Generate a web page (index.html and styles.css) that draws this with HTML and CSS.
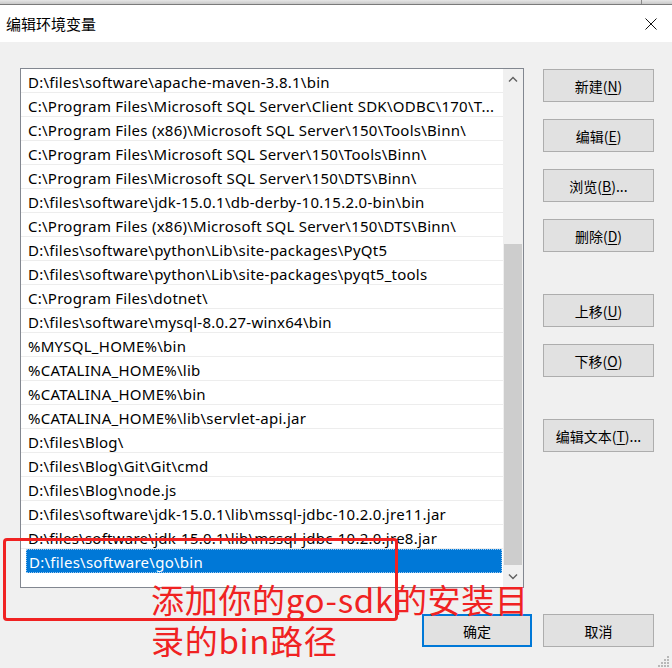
FILE: index.html
```html
<!DOCTYPE html>
<html lang="zh-CN">
<head>
<meta charset="utf-8">
<title>编辑环境变量</title>
<link rel="stylesheet" href="styles.css">
</head>
<body>
<div class="win">
  <div class="behind"><div class="behind-a"></div><div class="behind-b"></div></div>
  <div class="titlebar">
    <span class="title">编辑环境变量</span>
    <svg class="close" width="14" height="14" viewBox="0 0 14 14"><path d="M1.5 1.5 L12.5 12.5 M12.5 1.5 L1.5 12.5" stroke="#111" stroke-width="1" fill="none"/></svg>
  </div>
  <div class="content">
    <div class="main">
      <div class="list">
        <div class="rows">
          <div class="row">D:\files\software\apache-maven-3.8.1\bin</div>
          <div class="row">C:\Program Files\Microsoft SQL Server\Client SDK\ODBC\170\T...</div>
          <div class="row">C:\Program Files (x86)\Microsoft SQL Server\150\Tools\Binn\</div>
          <div class="row">C:\Program Files\Microsoft SQL Server\150\Tools\Binn\</div>
          <div class="row">C:\Program Files\Microsoft SQL Server\150\DTS\Binn\</div>
          <div class="row">D:\files\software\jdk-15.0.1\db-derby-10.15.2.0-bin\bin</div>
          <div class="row">C:\Program Files (x86)\Microsoft SQL Server\150\DTS\Binn\</div>
          <div class="row">D:\files\software\python\Lib\site-packages\PyQt5</div>
          <div class="row">D:\files\software\python\Lib\site-packages\pyqt5_tools</div>
          <div class="row">C:\Program Files\dotnet\</div>
          <div class="row">D:\files\software\mysql-8.0.27-winx64\bin</div>
          <div class="row">%MYSQL_HOME%\bin</div>
          <div class="row">%CATALINA_HOME%\lib</div>
          <div class="row">%CATALINA_HOME%\bin</div>
          <div class="row">%CATALINA_HOME%\lib\servlet-api.jar</div>
          <div class="row">D:\files\Blog\</div>
          <div class="row">D:\files\Blog\Git\Git\cmd</div>
          <div class="row">D:\files\Blog\node.js</div>
          <div class="row">D:\files\software\jdk-15.0.1\lib\mssql-jdbc-10.2.0.jre11.jar</div>
          <div class="row">D:\files\software\jdk-15.0.1\lib\mssql-jdbc-10.2.0.jre8.jar</div>
          <div class="row selected">D:\files\software\go\bin</div>
        </div>
        <div class="sbar">
          <div class="sb-btn"><svg width="10" height="6" viewBox="0 0 10 6"><path d="M1 5.5 L5 1.5 L9 5.5" stroke="#606060" stroke-width="1.4" fill="none"/></svg></div>
          <div class="sb-track"><div class="sb-thumb"></div></div>
          <div class="sb-btn"><svg width="10" height="6" viewBox="0 0 10 6"><path d="M1 0.5 L5 4.5 L9 0.5" stroke="#606060" stroke-width="1.4" fill="none"/></svg></div>
        </div>
      </div>
      <div class="side">
        <button class="btn">新建(<u>N</u>)</button>
        <button class="btn">编辑(<u>E</u>)</button>
        <button class="btn">浏览(<u>B</u>)...</button>
        <button class="btn">删除(<u>D</u>)</button>
        <button class="btn group">上移(<u>U</u>)</button>
        <button class="btn">下移(<u>O</u>)</button>
        <button class="btn group">编辑文本(<u>T</u>)...</button>
      </div>
    </div>
    <div class="footer">
      <button class="btn primary">确定</button>
      <button class="btn">取消</button>
    </div>
  </div>
  <div class="annot-box"></div>
  <div class="annot-text">添加你的go-sdk的安装目<br>录的bin路径</div>
  <svg class="grip" width="12" height="12" viewBox="0 0 12 12">
    <rect x="9" y="1" width="2" height="2" fill="#b8b8b8"/>
    <rect x="6" y="4" width="2" height="2" fill="#b8b8b8"/>
    <rect x="9" y="4" width="2" height="2" fill="#b8b8b8"/>
    <rect x="3" y="7" width="2" height="2" fill="#b8b8b8"/>
    <rect x="6" y="7" width="2" height="2" fill="#b8b8b8"/>
    <rect x="9" y="7" width="2" height="2" fill="#b8b8b8"/>
    <rect x="0" y="10" width="2" height="2" fill="#b8b8b8"/>
    <rect x="3" y="10" width="2" height="2" fill="#b8b8b8"/>
    <rect x="6" y="10" width="2" height="2" fill="#b8b8b8"/>
    <rect x="9" y="10" width="2" height="2" fill="#b8b8b8"/>
  </svg>
</div>
</body>
</html>
```

FILE: styles.css
```css
* { box-sizing: border-box; }
html, body { margin: 0; padding: 0; }
body {
  width: 672px;
  height: 668px;
  overflow: hidden;
  background: #f0f0f0;
  font-family: "Noto Sans", "Noto Sans CJK SC", sans-serif;
}
.win {
  position: relative;
  width: 672px;
  height: 668px;
  background: #f0f0f0;
}
.behind {
  display: flex;
  height: 5px;
  border-bottom: 1px solid #7a7a7a;
  background: linear-gradient(#e6e6e6, #c9c9c9);
}
.behind-a { width: 641px; }
.behind-b { flex: 1; border-left: 1px solid #8a8a8a; }
.titlebar {
  display: flex;
  align-items: center;
  justify-content: space-between;
  height: 37px;
  background: #ffffff;
  padding: 0 14px 0 6px;
}
.title {
  font-family: "Noto Sans CJK SC", sans-serif;
  font-size: 15px;
  color: #000;
}
.close { display: block; }
.content {
  padding: 26px 18px 0 20px;
}
.main {
  display: flex;
  align-items: flex-start;
}
.list {
  display: flex;
  width: 504px;
  height: 520px;
  border: 1px solid #828790;
  background: #fff;
}
.rows {
  flex: 1;
  min-width: 0;
}
.row {
  height: 24px;
  line-height: 23px;
  padding-left: 7px;
  padding-top: 2px;
  border-bottom: 1px solid #ededed;
  font-size: 15px;
  letter-spacing: 0.25px;
  color: #000;
  white-space: nowrap;
  overflow: hidden;
}
.row.selected {
  margin-left: 5px;
  margin-right: 1px;
  padding-left: 2px;
  padding-top: 2px;
  background: #0078d7;
  color: #fff;
  border: 1px dotted #9cc8ef;
  line-height: 20px;
}
.sbar {
  width: 20px;
  display: flex;
  flex-direction: column;
  background: #f0f0f0;
}
.sb-btn {
  height: 20px;
  display: flex;
  align-items: center;
  justify-content: center;
}
.sb-track {
  flex: 1;
  padding: 155px 1px 0 1px;
}
.sb-thumb {
  height: 321px;
  background: #cdcdcd;
}
.side {
  margin-left: 19px;
  padding-top: 1px;
  display: flex;
  flex-direction: column;
  gap: 17px;
}
.btn {
  width: 111px;
  height: 33px;
  margin: 0;
  padding: 0;
  border: 1px solid #adadad;
  background: #e1e1e1;
  font-family: "Noto Sans CJK SC", sans-serif;
  font-size: 14px;
  color: #000;
  text-align: center;
}
.btn u { text-underline-offset: 2px; }
.btn.group { margin-top: 25px; }
.footer {
  display: flex;
  justify-content: flex-end;
  gap: 11px;
  margin-top: 26px;
}
.btn.primary {
  width: 110px;
  border: 2px solid #0078d7;
}
.annot-box {
  position: absolute;
  left: 3px;
  top: 538px;
  width: 395px;
  height: 83px;
  border: 3px solid #f02222;
  border-radius: 4px;
}
.annot-text {
  position: absolute;
  left: 151px;
  top: 579px;
  font-family: "Noto Sans CJK SC", sans-serif;
  font-size: 33px;
  letter-spacing: 0.7px;
  line-height: 41px;
  color: #f02222;
  white-space: nowrap;
}
.grip {
  position: absolute;
  right: 2px;
  bottom: 1px;
}
```
